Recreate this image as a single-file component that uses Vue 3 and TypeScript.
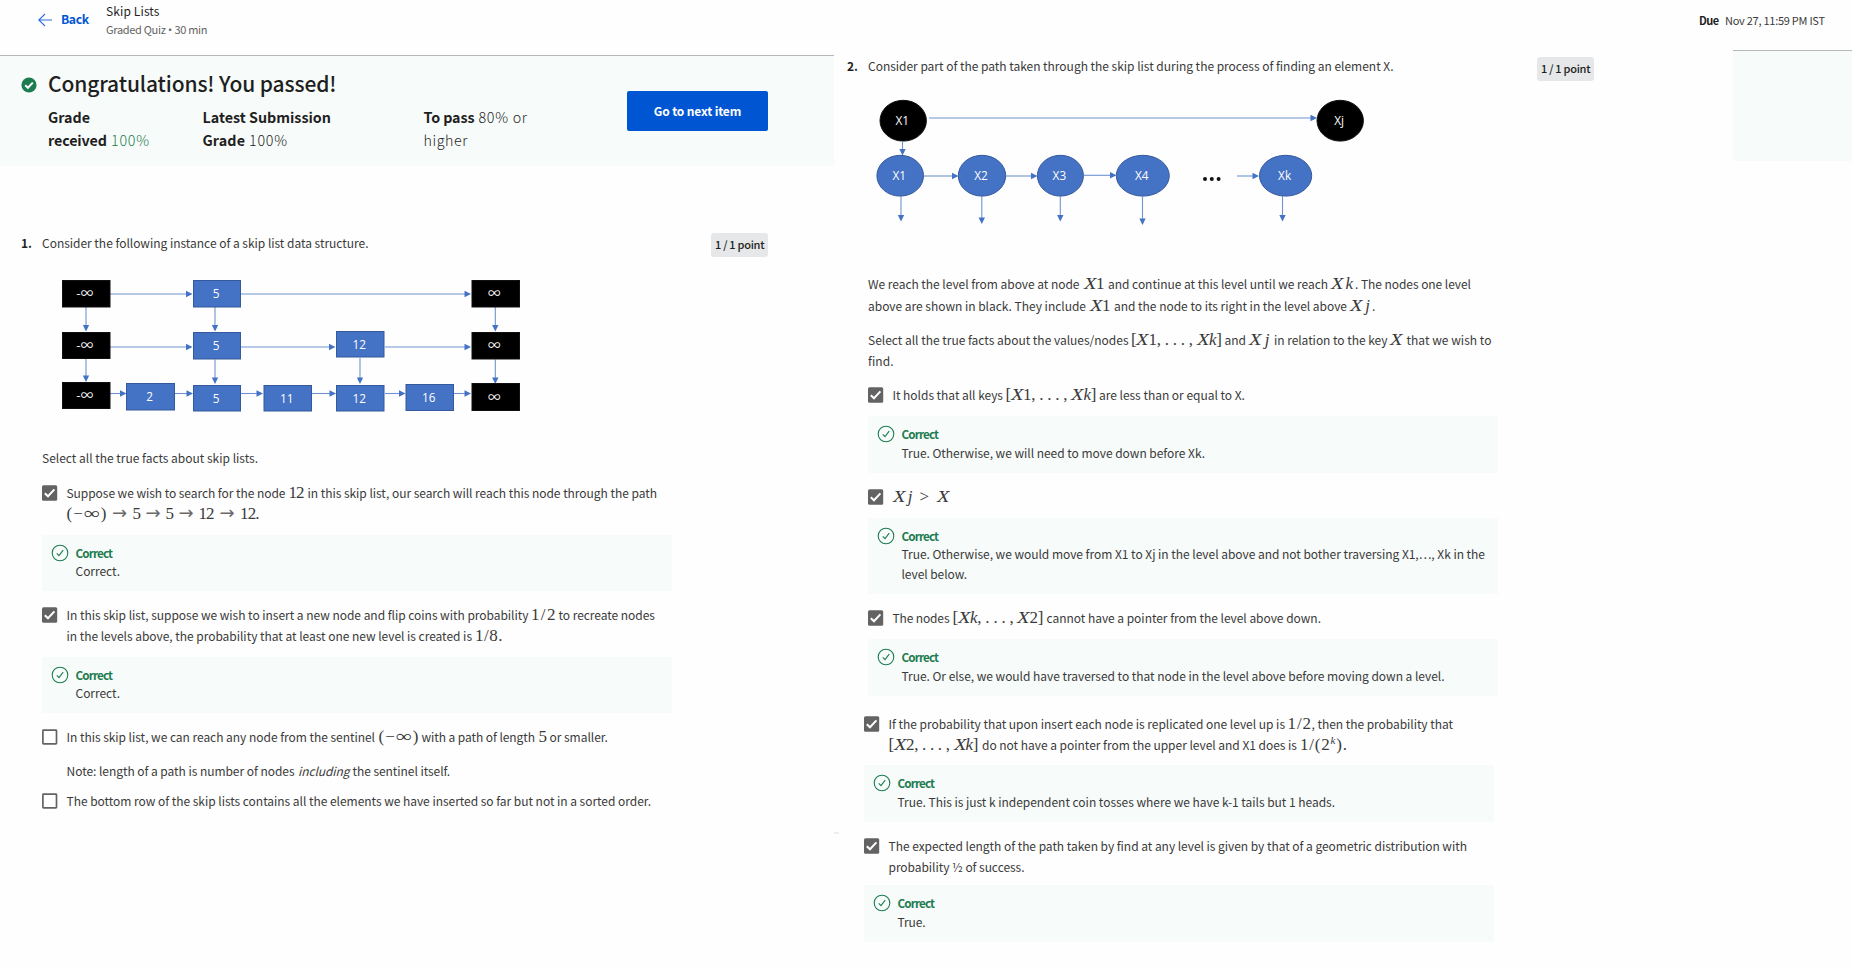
<script setup lang="ts">
import { h, type FunctionalComponent } from 'vue'

// A run of text: content, left and right edge in px, and its kind.
type Kind = 'text' | 'math' | 'em'
type Run = [content: string, from: number, to: number, kind?: Kind]
type Line = Run[]
interface Option {
  checked: boolean
  lines: Line[]
  note?: Line
  feedback?: Line[]
  mod?: string
}

// Tracks the letters of an element so that its glyphs span the given width.
const vFit = {
  mounted(el: HTMLElement, binding: { value: number }) {
    const natural = el.getBoundingClientRect().width
    const count = (el.textContent ?? '').length
    if (count > 1) {
      const tracking = (binding.value - natural) / (count - 1)
      el.style.letterSpacing = `${tracking}px`
      el.style.marginRight = `${-tracking}px`
    } else {
      el.style.marginRight = `${binding.value - natural}px`
    }
  },
}

const gapBefore = (line: Line, index: number, origin: number): string => {
  const prev = index === 0 ? origin : line[index - 1][2]
  return `${line[index][1] - prev}px`
}

// Letters are set in italics, digits and signs upright, "^" raises what follows.
const MathText: FunctionalComponent<{ source: string }> = (props) =>
  (props.source.match(/\^.|[A-Za-z∞→]|[^A-Za-z^∞→]+/g) ?? []).map((part) => {
    if (part[0] === '^') return h('sup', { class: 'power' }, part.slice(1))
    if (part === '∞') return h('span', { class: 'infinity' }, part)
    if (part === '→') return h('span', { class: 'to' }, part)
    if (/[A-Z]/.test(part)) return h('i', { class: 'cap' }, part)
    return /[a-z]/.test(part) ? h('i', part) : part
  })
MathText.props = ['source']

const leftPrompt: Line = [['Select all the true facts about skip lists.', 42, 258]]

const leftOptions: Option[] = [
  {
    checked: true,
    lines: [
      [
        ['Suppose we wish to search for the node', 67, 286],
        ['12', 289, 305, 'math'],
        ['in this skip list, our search will reach this node through the path', 308, 657.5],
      ],
      [
        ['(−∞)', 67, 107, 'math'], ['→', 112.5, 128, 'math'], ['5', 133, 141, 'math'],
        ['→', 146, 161, 'math'], ['5', 166, 174, 'math'], ['→', 179, 194, 'math'],
        ['12', 199, 215, 'math'], ['→', 220, 235, 'math'], ['12.', 240.5, 260, 'math'],
      ],
    ],
    feedback: [[['Correct.', 76, 120.5]]],
  },
  {
    checked: true,
    lines: [
      [
        ['In this skip list, suppose we wish to insert a new node and flip coins with probability', 67, 529],
        ['1/2', 531.5, 556, 'math'],
        ['to recreate nodes', 559, 655.5],
      ],
      [
        ['in the levels above, the probability that at least one new level is created is', 67, 472.5],
        ['1/8.', 475.5, 503, 'math'],
      ],
    ],
    feedback: [[['Correct.', 76, 120.5]]],
  },
  {
    checked: false,
    lines: [
      [
        ['In this skip list, we can reach any node from the sentinel', 67, 375.5],
        ['(−∞)', 379, 419, 'math'],
        ['with a path of length', 422, 535.5],
        ['5', 539, 547, 'math'],
        ['or smaller.', 550, 608.5],
      ],
    ],
    note: [
      ['Note: length of a path is number of nodes', 67, 295],
      ['including', 298.5, 350, 'em'],
      ['the sentinel itself.', 353, 450.5],
    ],
  },
  {
    checked: false,
    mod: 'after-note',
    lines: [[['The bottom row of the skip lists contains all the elements we have inserted so far but not in a sorted order.', 67, 651.5]]],
  },
]

const rightPrompts: Line[][] = [
  [
    [
      ['We reach the level from above at node', 868, 1079.5],
      ['X1', 1083.5, 1104.5, 'math'],
      ['and continue at this level until we reach', 1108, 1328],
      ['Xk', 1331, 1353, 'math'],
      ['. The nodes one level', 1355, 1471],
    ],
    [
      ['above are shown in black. They include', 868, 1086],
      ['X1', 1089.5, 1110.5, 'math'],
      ['and the node to its right in the level above', 1114, 1347],
      ['Xj', 1350.5, 1370, 'math'],
      ['.', 1372, 1375],
    ],
  ],
  [
    [
      ['Select all the true facts about the values/nodes', 868, 1128.5],
      ['[X1, . . . , Xk]', 1131, 1222, 'math'],
      ['and', 1224.5, 1246],
      ['Xj', 1249.5, 1269.5, 'math'],
      ['in relation to the key', 1274, 1387.5],
      ['X', 1390, 1404, 'math'],
      ['that we wish to', 1406.5, 1491.5],
    ],
    [['find.', 868, 893.5]],
  ],
]

const rightOptions: Option[] = [
  {
    checked: true,
    lines: [
      [
        ['It holds that all keys', 893, 1003.5],
        ['[X1, . . . , Xk]', 1006, 1097, 'math'],
        ['are less than or equal to X.', 1099.5, 1245.5],
      ],
    ],
    feedback: [[['True. Otherwise, we will need to move down before Xk.', 902, 1205.5]]],
    mod: 'roomy',
  },
  {
    checked: true,
    lines: [[['Xj', 893, 913, 'math'], ['>', 920, 931, 'math'], ['X', 937, 950, 'math']]],
    feedback: [
      [['True. Otherwise, we would move from X1 to Xj in the level above and not bother traversing X1,…, Xk in the', 902, 1485.5]],
      [['level below.', 902, 967.5]],
    ],
  },
  {
    checked: true,
    lines: [
      [
        ['The nodes', 893, 950],
        ['[Xk, . . . , X2]', 953, 1044, 'math'],
        ['cannot have a pointer from the level above down.', 1047, 1321.5],
      ],
    ],
    feedback: [[['True. Or else, we would have traversed to that node in the level above before moving down a level.', 902, 1445]]],
    mod: 'roomy',
  },
]

const shiftedOptions: Option[] = [
  {
    checked: true,
    lines: [
      [
        ['If the probability that upon insert each node is replicated one level up is', 889, 1285.5],
        ['1/2', 1288, 1311.5, 'math'],
        [', then the probability that', 1312, 1453.5],
      ],
      [
        ['[X2, . . . , Xk]', 889, 979, 'math'],
        ['do not have a pointer from the upper level and X1 does is', 982.5, 1297.5],
        ['1/(2^k).', 1300.5, 1347.5, 'math'],
      ],
    ],
    feedback: [[['True. This is just k independent coin tosses where we have k-1 tails but 1 heads.', 898, 1335.5]]],
    mod: 'roomy tight',
  },
  {
    checked: true,
    lines: [
      [['The expected length of the path taken by find at any level is given by that of a geometric distribution with', 889, 1467.5]],
      [['probability ½ of success.', 889, 1025]],
    ],
    feedback: [[['True.', 898, 926]]],
    mod: 'roomy plain',
  },
]

const groups = [
  { name: 'left', origin: 42, options: leftOptions },
  { name: 'right', origin: 868, options: rightOptions },
  { name: 'shifted', origin: 864, options: shiftedOptions },
]

// Skip list drawing: x, y, width, height, label, dark
const boxes: [number, number, number, number, string, boolean][] = [
  [62, 280, 48.5, 27.5, '-∞', true], [193, 280, 48, 27.5, '5', false], [471.5, 280, 48.5, 27.5, '∞', true],
  [62, 332, 48.5, 27, '-∞', true], [193, 332, 48, 27.5, '5', false], [336, 331, 48.5, 26.5, '12', false],
  [471.5, 332, 48.5, 27.5, '∞', true],
  [62, 382, 48.5, 27, '-∞', true], [126, 383, 49, 27.5, '2', false], [193, 385, 48, 26.5, '5', false],
  [263.5, 385, 48.5, 26.5, '11', false], [336, 385, 48.5, 26.5, '12', false], [405.5, 384, 48.5, 27, '16', false],
  [471.5, 383, 48.5, 28, '∞', true],
]
const across: [number, number, number][] = [
  [110, 192.5, 294], [241, 471, 294], [110, 192.5, 347], [241, 335.5, 347], [385, 471, 347],
  [110, 126.5, 393.5], [175, 193, 393.5], [241, 263, 393.5], [312, 336, 393.5], [385, 405.5, 393.5], [454, 471, 393.5],
]
const down: [number, number, number][] = [
  [86, 307, 331.5], [86, 359, 382], [215, 307, 331.5], [215, 359.5, 384],
  [360, 358, 384], [495.3, 307, 331.5], [495.3, 359.5, 384],
]

// Search path drawing: cx, cy, rx, label, dark
const discs: [number, number, number, string, boolean][] = [
  [903.2, 120.7, 23.7, 'X1', true], [1340.2, 120.7, 23.7, 'Xj', true],
  [900.2, 175.7, 23.8, 'X1', false], [982, 175.7, 24.2, 'X2', false], [1060.4, 175.7, 23.5, 'X3', false],
  [1142.8, 175.7, 27, 'X4', false], [1285.6, 175.7, 26.6, 'Xk', false],
]
const pathAcross: [number, number, number][] = [
  [929, 1317, 118], [924, 958.5, 176], [1006, 1037.5, 176], [1084, 1116.5, 175.3], [1237, 1259, 176],
]
const pathDown: [number, number, number][] = [
  [902.5, 141, 155.5], [901, 196, 221.5], [981.8, 196, 224], [1060.3, 196, 221.5], [1142.5, 196, 225], [1282.5, 196, 221.5],
]
</script>

<template>
  <div class="page">
    <header class="top">
      <svg class="arrow" viewBox="0 0 16 14" width="16" height="14"><path d="M8 1 L1.8 7 L8 13 M1.8 7 H15" /></svg>
      <a class="back"><span v-fit="28">Back</span></a>
      <div class="titles">
        <div class="title"><span v-fit="53.5">Skip Lists</span></div>
        <div class="sub"><span v-fit="101.5">Graded Quiz<i class="bullet"> • </i>30 min</span></div>
      </div>
      <div class="due"><b v-fit="20">Due</b><span class="date"><span v-fit="100">Nov 27, 11:59 PM IST</span></span></div>
    </header>

    <div class="columns">
      <main class="col col-left">
        <section class="banner">
          <svg class="passed" viewBox="0 0 16 16" width="16" height="16">
            <circle cx="8" cy="8" r="7.6" /><path d="M4.2 8.3 L6.9 10.8 L11.8 5.6" />
          </svg>
          <div class="result">
            <h1><span v-fit="288.5">Congratulations! You passed!</span></h1>
            <div class="stats">
              <div class="stat s1"><div><b v-fit="42">Grade</b></div><div><b v-fit="59">received</b><span class="thin green"><span v-fit="38">100%</span></span></div></div>
              <div class="stat s2"><div><b v-fit="128.5">Latest Submission</b></div><div><b v-fit="42.5">Grade</b><span class="thin"><span v-fit="38">100%</span></span></div></div>
              <div class="stat s3"><div><b v-fit="51">To pass</b><span class="thin"><span v-fit="48.5">80% or</span></span></div><div><span v-fit="44" class="thin higher">higher</span></div></div>
            </div>
          </div>
          <button class="next"><span v-fit="87.5">Go to next item</span></button>
        </section>

        <div class="question q1">
          <b class="num">1.</b><span class="ask"><span v-fit="326.5">Consider the following instance of a skip list data structure.</span></span>
          <span class="points"><span v-fit="49.5">1 / 1 point</span></span>
        </div>

        <svg class="drawing d1" viewBox="60 278 462 136" width="462" height="136">
          <g v-for="(a, i) in across" :key="'a' + i">
            <path class="wire" :d="`M${a[0]} ${a[2]} H${a[1] - 4}`" />
            <path class="tip" :d="`M${a[1]} ${a[2]} l-6.5 -3.2 v6.4 z`" />
          </g>
          <g v-for="(a, i) in down" :key="'d' + i">
            <path class="wire" :d="`M${a[0]} ${a[1]} V${a[2] - 4}`" />
            <path class="tip" :d="`M${a[0]} ${a[2]} l-3.2 -6.5 h6.4 z`" />
          </g>
          <g v-for="(b, i) in boxes" :key="'b' + i">
            <rect :class="b[5] ? 'dark' : 'blue'" :x="b[0] + 0.5" :y="b[1] + 0.5" :width="b[2] - 1" :height="b[3] - 1" />
            <text class="label" :class="{ sentinel: b[5] }" :x="b[0] + b[2] / 2 - (b[5] ? 1.5 : 1)" :y="b[1] + b[3] / 2 + 4.5">{{ b[4] }}</text>
          </g>
        </svg>

        <div class="line prompt"><span v-for="(r, j) in leftPrompt" :key="j" v-fit="r[2] - r[1]">{{ r[0] }}</span></div>
      </main>

      <main class="col col-right">
        <div class="question q2">
          <b class="num">2.</b><span class="ask"><span v-fit="525.5">Consider part of the path taken through the skip list during the process of finding an element X.</span></span>
          <span class="points"><span v-fit="49.5">1 / 1 point</span></span>
        </div>
        <svg class="drawing d2" viewBox="868 96 500 132" width="500" height="132">
          <g v-for="(a, i) in pathAcross" :key="'a' + i">
            <path class="wire" :d="`M${a[0]} ${a[2]} H${a[1] - 4}`" />
            <path class="tip" :d="`M${a[1]} ${a[2]} l-6.5 -3.2 v6.4 z`" />
          </g>
          <g v-for="(c, i) in discs" :key="'c' + i">
            <ellipse :class="c[4] ? 'dark' : 'blue'" :cx="c[0]" :cy="c[1]" :rx="c[2] - 0.5" ry="20.4" />
            <text class="label" :x="c[0] - 1" :y="c[1] + 4.3">{{ c[3] }}</text>
          </g>
          <g v-for="(a, i) in pathDown" :key="'d' + i">
            <path class="wire" :d="`M${a[0]} ${a[1]} V${a[2] - 4}`" />
            <path class="tip" :d="`M${a[0]} ${a[2]} l-3.2 -6.5 h6.4 z`" />
          </g>
          <circle v-for="x in [1205, 1211.8, 1218.6]" :key="x" class="dot" :cx="x" cy="179" r="2" />
        </svg>
        <div v-for="(p, k) in rightPrompts" :key="k" class="para" :class="'p' + k">
          <div v-for="(line, i) in p" :key="i" class="line">
            <span v-for="(r, j) in line" :key="j" class="run" :style="{ marginLeft: gapBefore(line, j, 868) }"><span v-fit="r[2] - r[1]" :class="r[3] ?? 'text'"><MathText v-if="r[3] === 'math'" :source="r[0]" /><template v-else>{{ r[0] }}</template></span></span>
          </div>
        </div>
      </main>

      <aside class="strip"></aside>

      <section v-for="g in groups" :key="g.name" class="options" :class="'options-' + g.name">
        <div v-for="(o, n) in g.options" :key="n" class="option" :class="o.mod">
          <div class="choice">
            <svg class="check" viewBox="0 0 16 16" width="16" height="16">
              <template v-if="o.checked"><rect class="on" x="0" y="0.3" width="15.2" height="15.4" rx="1.5" /><path d="M2.8 8.2 L6 11.3 L12.4 4.4" /></template>
              <rect v-else class="off" x="0.9" y="1.2" width="13.6" height="13.6" rx="0.6" />
            </svg>
            <div class="body">
              <div v-for="(line, i) in o.lines" :key="i" class="line">
                <span v-for="(r, j) in line" :key="j" class="run" :style="{ marginLeft: gapBefore(line, j, g.origin + 25) }"><span v-fit="r[2] - r[1]" :class="r[3] ?? 'text'"><MathText v-if="r[3] === 'math'" :source="r[0]" /><template v-else>{{ r[0] }}</template></span></span>
              </div>
              <div v-if="o.note" class="line note">
                <span v-for="(r, j) in o.note" :key="j" class="run" :style="{ marginLeft: gapBefore(o.note, j, g.origin + 25) }"><span v-fit="r[2] - r[1]" :class="r[3] ?? 'text'">{{ r[0] }}</span></span>
              </div>
            </div>
          </div>
          <div v-if="o.feedback" class="feedback">
            <svg class="ok" viewBox="0 0 18 18" width="18" height="18"><circle cx="9" cy="9" r="7.8" /><path d="M5.8 9.3 L8 11.7 L12.2 6.2" /></svg>
            <div class="explain">
              <div class="verdict"><b v-fit="37.5">Correct</b></div>
              <div v-for="(line, i) in o.feedback" :key="i" class="line why">
                <span v-for="(r, j) in line" :key="j" v-fit="r[2] - r[1]">{{ r[0] }}</span>
              </div>
            </div>
          </div>
        </div>
      </section>
      <i class="speck"></i>
    </div>
  </div>
</template>

<style>
html,
body {
  margin: 0;
  background: #fff;
}
</style>

<style scoped>
.page {
  width: 1852px;
  height: 968px;
  overflow: hidden;
  background: #fefefe;
  color: #3a3a3a;
  font-family: "Noto Sans CJK SC", "Open Sans", sans-serif;
  font-size: 12px;
  line-height: 21px;
  white-space: pre;
}
.top {
  display: flex;
  height: 50px;
  box-sizing: border-box;
  padding-left: 37px;
}
.arrow {
  margin-top: 13px;
  fill: none;
  stroke: #2b6fdc;
  stroke-width: 1.1;
}
.back {
  margin: 9px 0 0 8px;
  width: 45px;
  font-weight: 700;
  font-size: 12.2px;
  color: #0056d2;
}
.titles {
  padding-top: 2px;
}
.title {
  line-height: 18px;
  color: #1f1f1f;
}
.sub {
  font-size: 11px;
  line-height: 18px;
  color: #636363;
}
.bullet {
  font-family: "Open Sans", sans-serif;
  font-style: normal;
}
.due {
  margin: 10px 27px 0 auto;
  font-size: 11px;
}
.due b {
  color: #1f1f1f;
}
.date {
  margin-left: 6px;
}
.columns {
  display: grid;
  grid-template-columns: 834px 899px 119px;
  grid-template-rows: 918px;
}
.col-left {
  grid-area: 1 / 1;
  padding-top: 5px;
}
.col-right {
  grid-area: 1 / 2;
}
.strip {
  grid-area: 1 / 3;
  height: 110px;
  border-top: 1px solid #b4b9b8;
  background: #f7fbfa;
}
.banner {
  display: flex;
  height: 110px;
  border-top: 1px solid #b4b9b8;
  background: #f7fbfa;
}
.passed {
  margin: 20.5px 0 0 21px;
}
.passed circle {
  fill: #1d7c50;
}
.passed path {
  fill: none;
  stroke: #fff;
  stroke-width: 2;
}
.result {
  width: 579px;
  margin-left: 11px;
}
h1 {
  margin: 13px 0 0;
  font-size: 21px;
  line-height: 28px;
  font-weight: 500;
  color: #1f1f1f;
  height: 37px;
}
.stats {
  display: flex;
  font-size: 14.3px;
  line-height: 22.7px;
}
.stat b {
  font-weight: 600;
  color: #1f1f1f;
}
.s1 {
  width: 154.5px;
}
.s2 {
  width: 221px;
}
.thin {
  font-weight: 300;
  margin-left: 4px;
  color: #1f1f1f;
}
.higher {
  margin-left: 0;
}
.thin.green {
  color: #1d7c50;
}
.next {
  width: 141px;
  height: 40px;
  margin-top: 35px;
  padding: 0;
  border: 0;
  border-radius: 2px;
  background: #0056d2;
  color: #fff;
  font: 700 12px/38px "Noto Sans CJK SC", sans-serif;
}
.question {
  display: flex;
}
.q1 {
  margin-top: 66px;
  padding-left: 21px;
  height: 46px;
}
.q2 {
  padding: 6px 0 0 13px;
  height: 40px;
}
.num {
  width: 21px;
  color: #1f1f1f;
}
.ask {
  width: 669px;
}
.q2 .ask,
.q2 .num {
  line-height: 20px;
}
.points {
  width: 57px;
  height: 24px;
  margin-top: 1px;
  border-radius: 3px;
  background: #e5e7e8;
  box-sizing: border-box;
  padding-left: 4px;
  font-weight: 500;
  font-size: 11px;
  line-height: 23px;
  color: #1f1f1f;
}
.drawing {
  display: block;
}
.d1 {
  margin-left: 60px;
}
.d2 {
  margin-left: 34px;
}
.wire {
  fill: none;
  stroke: #6e93d0;
  stroke-width: 1.1;
}
.tip {
  fill: #4472c4;
}
.dark {
  fill: #000;
  stroke: #111;
}
.blue {
  fill: #4472c4;
  stroke: #35599c;
}
.label {
  fill: #fff;
  font-family: "Open Sans", sans-serif;
  font-size: 11.8px;
  text-anchor: middle;
}
.sentinel {
  font-family: "Noto Sans CJK SC", sans-serif;
  font-size: 12.5px;
}
.dot {
  fill: #111;
}
.prompt {
  margin: 33px 0 0 42px;
}
.line {
  height: 21px;
}
.para {
  margin-left: 34px;
}
.p0 {
  margin-top: 45px;
}
.p0 .line {
  height: 22px;
}
.p1 {
  margin-top: 12px;
}
.math {
  font-family: "Liberation Serif", serif;
  font-size: 17px;
  line-height: 0;
}
.math :deep(.power) {
  font-size: 11px;
  font-style: italic;
  line-height: 0;
  vertical-align: 6px;
}
.math :deep(.cap) {
  display: inline-block;
  margin-right: 2px;
  transform: scaleX(1.2);
  transform-origin: left;
}
.math :deep(.infinity) {
  display: inline-block;
  margin-right: 4px;
  transform: scaleX(1.35);
  transform-origin: left;
}
.math :deep(.to) {
  font-family: "DejaVu Sans", sans-serif;
  font-size: 18px;
  color: #6a6a6a;
}
.em {
  font-style: italic;
}
.options-left {
  grid-area: 1 / 1;
  margin: 431px 0 0 42px;
  width: 630px;
  height: 340px;
}
.options-right {
  grid-area: 1 / 2;
  margin: 333px 0 0 34px;
  width: 630px;
  height: 320px;
}
.options-shifted {
  grid-area: 1 / 2;
  margin: 662px 0 0 30px;
  width: 630px;
  height: 240px;
}
.option {
  margin-bottom: 12px;
}
.choice {
  display: flex;
}
.choice .line {
  line-height: 23.5px;
}
.check {
  flex: none;
  width: 16px;
  margin: 3.5px 8.5px 0 0;
}
.check .on {
  fill: #636363;
}
.check path {
  fill: none;
  stroke: #fff;
  stroke-width: 2;
}
.check .off {
  fill: #fff;
  stroke: #636363;
  stroke-width: 1.7;
}
.note {
  margin-top: 13px;
}
.after-note {
  margin-top: -3px;
}
.feedback {
  display: flex;
  box-sizing: border-box;
  height: 56px;
  margin-top: 12px;
  padding: 6px 0 0 9px;
  background: #f7fbfa;
}
.roomy .feedback {
  height: 57px;
}
.feedback:has(.why + .why) {
  height: 76px;
}
.tight .feedback {
  margin-top: 11px;
}
.plain .choice .line {
  height: 20.5px;
}
.plain .feedback {
  margin-top: 10px;
}
.ok {
  margin: 3px 6.5px 0 0;
  flex: none;
  fill: none;
  stroke: #1d7c50;
  stroke-width: 1.1;
}
.verdict {
  height: 19px;
  font-size: 11.7px;
  line-height: 23px;
  color: #1d7c50;
}
.roomy .verdict {
  height: 20px;
}
.why {
  height: 20px;
  line-height: 21px;
}
.speck {
  position: absolute;
  left: 834px;
  top: 832px;
  width: 5px;
  height: 2px;
  background: #ededed;
}
</style>
